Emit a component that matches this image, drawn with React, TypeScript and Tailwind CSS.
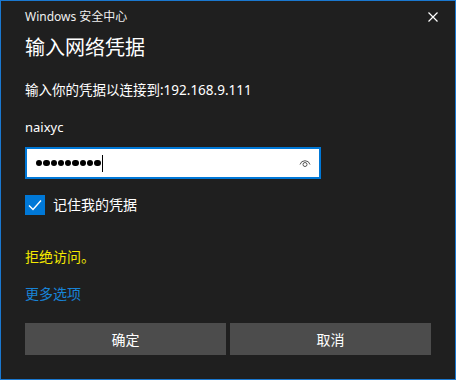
import React from 'react';

const font = { fontFamily: '"Noto Sans", "Noto Sans CJK SC", sans-serif' };

// 密码框里的圆点
const Dots = ({ count }: { count: number }) => (
    <div className="flex items-center gap-[1px]">
        {Array.from({ length: count }).map((_, i) => (
            <span key={i} className="block w-[6.3px] h-[6.3px] rounded-full bg-black" />
        ))}
    </div>
);

const App = () => {
    return (
        <div
            className="w-[456px] h-[380px] border border-[#1a78d0] bg-[#1f1f1f] text-white flex flex-col pl-[24px]"
            style={font}
        >
            {/* 标题栏 */}
            <div className="h-[32px] flex items-center justify-between pr-[17px]">
                <span className="text-[12px] leading-[16px] text-[#f0f0f0]">Windows 安全中心</span>
                <svg width="10" height="10" viewBox="0 0 10 10" className="text-white">
                    <path d="M0.5 0.5 L9.5 9.5 M9.5 0.5 L0.5 9.5" stroke="currentColor" strokeWidth="1.2" />
                </svg>
            </div>

            <div className="mt-[1px] h-[28px] text-[20px] leading-[28px]">输入网络凭据</div>

            <div className="mt-[18px] h-[20px] text-[13.5px] leading-[20px]">输入你的凭据以连接到:192.168.9.111</div>

            <div className="mt-[17px] h-[20px] text-[13px] leading-[20px]">naixyc</div>

            {/* 密码输入框 */}
            <div className="mt-[10px] w-[296px] h-[32px] border-2 border-[#0078d7] bg-white flex items-center pl-[9px] pr-[8px]">
                <Dots count={9} />
                <span className="block w-[1px] h-[17px] bg-black ml-[1px]" />
                <div className="flex-1" />
                <svg width="12" height="10" viewBox="0 0 12 10" fill="none" stroke="#555" strokeWidth="1">
                    <path d="M1 6.5 A5.2 5.2 0 0 1 11 6.5" />
                    <circle cx="6" cy="6.5" r="2" />
                </svg>
            </div>

            {/* 记住凭据 */}
            <div className="mt-[16px] h-[20px] flex items-center gap-[8px]">
                <div className="w-[20px] h-[20px] bg-[#0078d7] flex items-center justify-center">
                    <svg width="14" height="12" viewBox="0 0 14 12" fill="none" stroke="white" strokeWidth="1.4">
                        <path d="M1 6.5 L5 10.5 L13 1.5" />
                    </svg>
                </div>
                <span className="text-[14px] leading-[20px]">记住我的凭据</span>
            </div>

            <div className="mt-[32px] h-[20px] text-[14px] leading-[20px] text-[#f5e900]">拒绝访问。</div>

            <div className="mt-[17px] h-[20px] text-[14px] leading-[20px] text-[#1883d7]">更多选项</div>

            {/* 按钮 */}
            <div className="mt-[19px] flex gap-[4px]">
                <button className="w-[201px] h-[32px] bg-[#4c4c4c] text-[14px] text-white">确定</button>
                <button className="w-[201px] h-[32px] bg-[#4c4c4c] text-[14px] text-white">取消</button>
            </div>
        </div>
    );
};

export default App;
